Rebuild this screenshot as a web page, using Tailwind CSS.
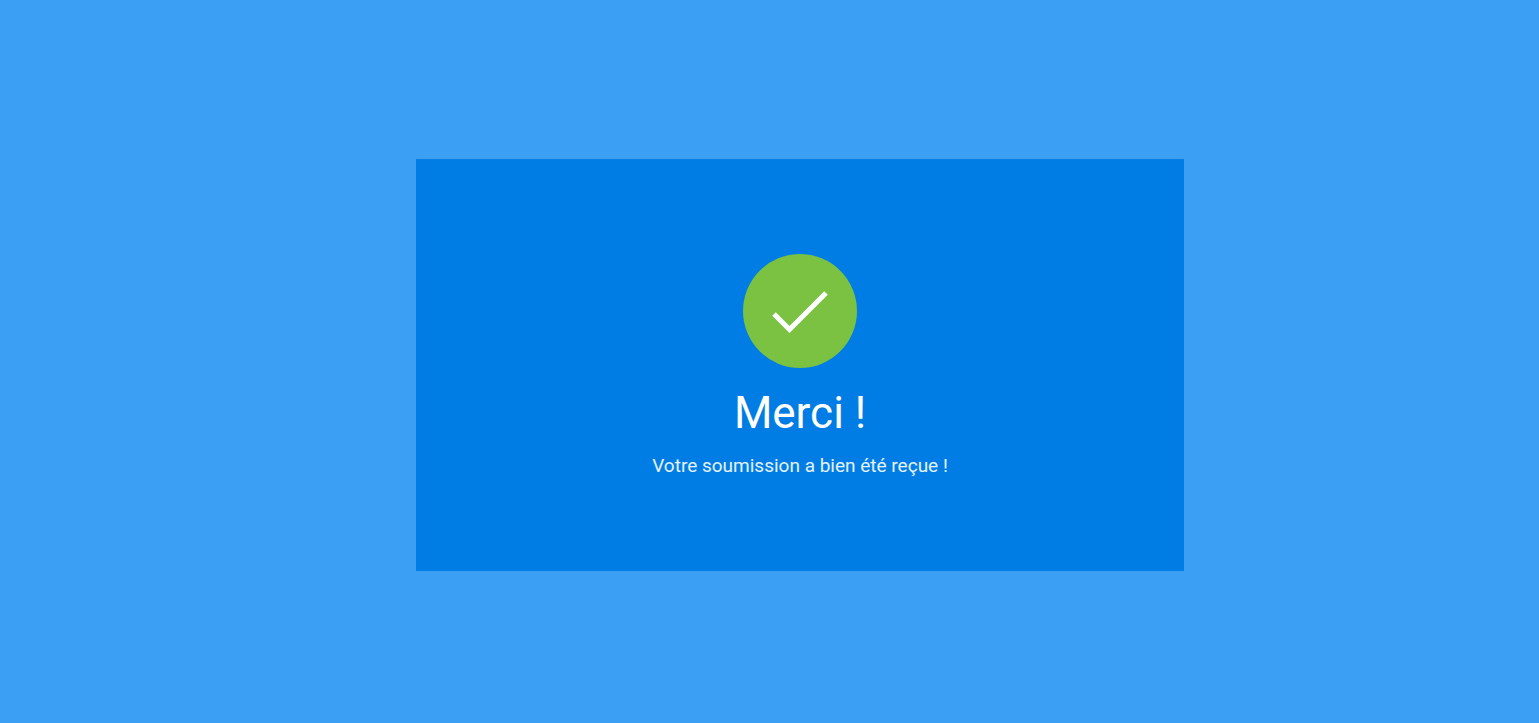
<!DOCTYPE html>
<html lang="fr">
<head>
  <meta charset="UTF-8" />
  <meta name="viewport" content="width=device-width, initial-scale=1.0">
  <title>Merci !</title>
  <script src="https://cdn.jsdelivr.net/npm/@tailwindcss/browser@4"></script>
</head>
<body class="bg-[#3ba0f4] font-[Roboto,sans-serif] text-white">
  <main class="min-h-screen flex items-center justify-center pt-[7px] pl-[61px]">
    <section class="w-full max-w-3xl bg-[#007de4] px-6 pt-[95px] pb-[93px] flex flex-col items-center text-center">
      <svg class="w-[114px] h-[114px]" viewBox="0 0 114 114" fill="none" aria-hidden="true">
        <circle cx="57" cy="57" r="57" fill="#7bc142" />
        <path d="M31 60 L46.5 75.5 L83 39" stroke="#fff" stroke-width="5" />
      </svg>
      <h1 class="mt-4 text-[44px] leading-[58px]">Merci !</h1>
      <p class="mt-3 text-[19px] leading-6 text-white/90">Votre soumission a bien été reçue !</p>
    </section>
  </main>
</body>
</html>
